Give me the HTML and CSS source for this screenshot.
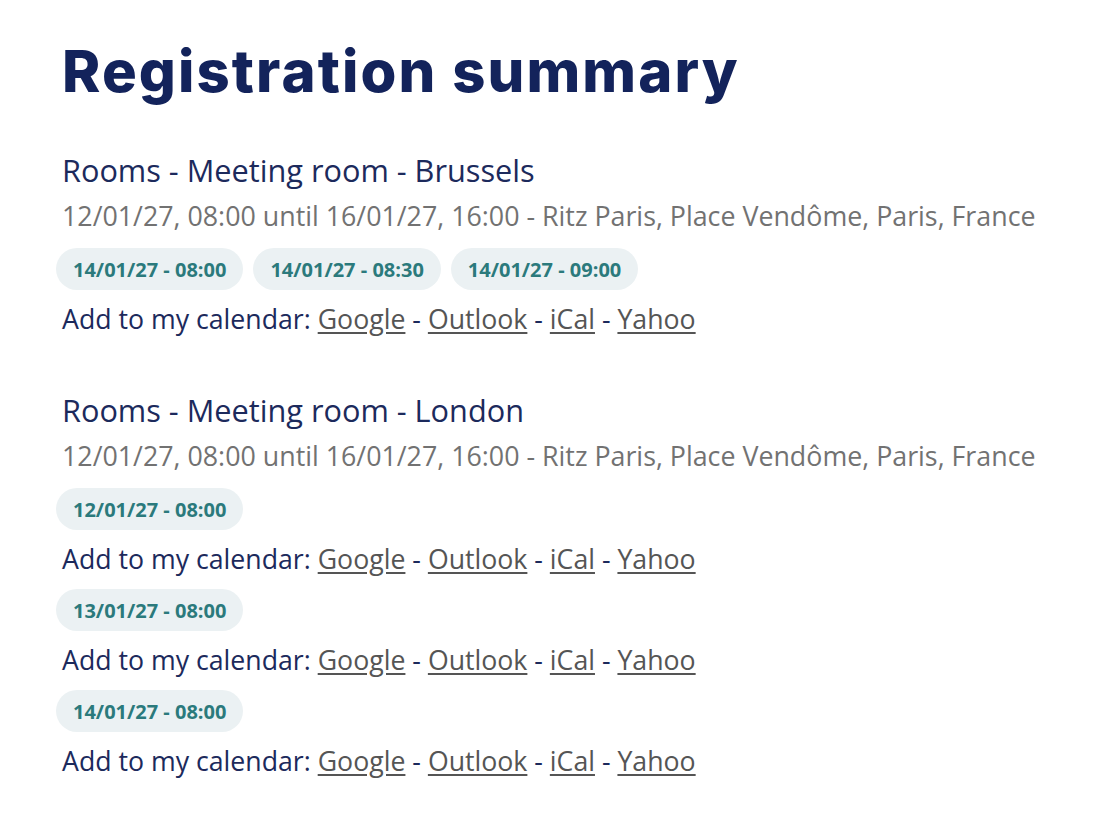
FILE: index.html
```html
<!DOCTYPE html>
<html lang="en">
<head>
<meta charset="utf-8">
<title>Registration summary</title>
<link rel="stylesheet" href="styles.css">
</head>
<body>
<main class="page">
  <h1 class="title">Registration summary</h1>

  <section class="item">
    <h2 class="item-name">Rooms - Meeting room - Brussels</h2>
    <p class="item-meta">12/01/27, 08:00 until 16/01/27, 16:00 - Ritz Paris, Place Vendôme, Paris, France</p>
    <div class="slots">
      <span class="slot">14/01/27 - 08:00</span>
      <span class="slot">14/01/27 - 08:30</span>
      <span class="slot">14/01/27 - 09:00</span>
    </div>
    <p class="cal">Add to my calendar: <a href="#">Google</a> - <a href="#">Outlook</a> - <a href="#">iCal</a> - <a href="#">Yahoo</a></p>
  </section>

  <section class="item">
    <h2 class="item-name">Rooms - Meeting room - London</h2>
    <p class="item-meta">12/01/27, 08:00 until 16/01/27, 16:00 - Ritz Paris, Place Vendôme, Paris, France</p>
    <div class="slots">
      <span class="slot">12/01/27 - 08:00</span>
    </div>
    <p class="cal">Add to my calendar: <a href="#">Google</a> - <a href="#">Outlook</a> - <a href="#">iCal</a> - <a href="#">Yahoo</a></p>
    <div class="slots">
      <span class="slot">13/01/27 - 08:00</span>
    </div>
    <p class="cal">Add to my calendar: <a href="#">Google</a> - <a href="#">Outlook</a> - <a href="#">iCal</a> - <a href="#">Yahoo</a></p>
    <div class="slots">
      <span class="slot">14/01/27 - 08:00</span>
    </div>
    <p class="cal">Add to my calendar: <a href="#">Google</a> - <a href="#">Outlook</a> - <a href="#">iCal</a> - <a href="#">Yahoo</a></p>
  </section>
</main>
</body>
</html>
```

FILE: styles.css
```css
html, body {
  margin: 0;
  padding: 0;
  background: #ffffff;
}

body {
  font-family: "Open Sans", "Liberation Sans", sans-serif;
  color: #1c2a5c;
}

.page {
  padding: 35px 0 0 62px;
}

.title {
  margin: 0 0 41px 0;
  font-family: Inter, "Open Sans", sans-serif;
  font-weight: 800;
  font-size: 58px;
  line-height: 72px;
  letter-spacing: 2.1px;
  color: #13235b;
}

.item {
  margin: 0 0 49px 0;
}

.item-name {
  margin: 0;
  font-weight: 400;
  font-size: 30.7px;
  line-height: 45px;
  color: #1c2a5c;
}

.item-meta {
  margin: 0;
  font-size: 26.8px;
  line-height: 45px;
  color: #727272;
}

.slots {
  display: flex;
  gap: 10px;
  margin: 10px 0 9px -6px;
}

.slot {
  display: inline-flex;
  align-items: center;
  height: 42px;
  padding: 0 17px;
  border-radius: 21px;
  background: #ebf1f3;
  color: #2b7a7c;
  font-weight: 700;
  font-size: 20px;
}

.cal {
  margin: 0;
  font-size: 26.7px;
  line-height: 40px;
  color: #1c2a5c;
}

.cal a {
  color: #555555;
  text-decoration: underline;
  text-underline-offset: 3px;
}
```
